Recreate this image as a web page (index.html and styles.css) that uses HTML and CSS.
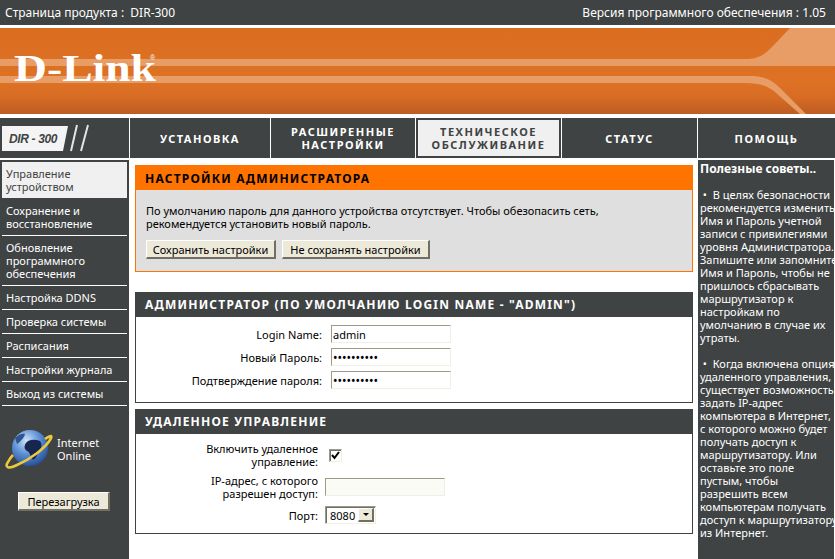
FILE: index.html
```html
<!DOCTYPE html>
<html lang="ru">
<head>
<meta charset="utf-8">
<title>D-Link DIR-300</title>
<link rel="stylesheet" href="styles.css">
</head>
<body>
<header class="topbar">
  <span>Страница продукта :&nbsp; DIR-300</span>
  <span>Версия программного обеспечения : 1.05</span>
</header>
<div class="banner">
  <svg class="banner-art" width="835" height="86" viewBox="0 0 835 86" aria-label="D-Link">
    <defs>
      <linearGradient id="bg" x1="0" y1="0" x2="0" y2="1">
        <stop offset="0" stop-color="#da6d20"/>
        <stop offset="0.6" stop-color="#de7224"/>
        <stop offset="0.8" stop-color="#d86c24"/>
        <stop offset="1" stop-color="#bd5c24"/>
      </linearGradient>
    </defs>
    <rect width="835" height="86" fill="url(#bg)"/>
    <path d="M0 31H745C758 31 764 27 772 19L790 0H835V38C800 38 780 38 760 38H0Z" fill="#e89d66"/>
    <path d="M0 48H750C765 48 772 52 780 60L806 86H835V86H800L775 64C768 58 760 55 745 55H0Z" fill="#e89d66"/>
    <text class="logo" x="14" y="53" textLength="142" lengthAdjust="spacingAndGlyphs">D-Link</text>
    <text class="logo-r" x="150" y="32">®</text>
  </svg>
</div>
<nav class="nav">
  <div class="nav-cell nav-model">
    <svg width="90" height="28" viewBox="0 0 90 28">
      <path d="M2 2H68L63 27H2Z" fill="#f4f4f4"/>
      <text class="model" x="9" y="19" textLength="50">DIR - 300</text>
      <path d="M77 1L71 27M88 1L81 27" stroke="#e4e4e4" stroke-width="2" fill="none"/>
    </svg>
  </div>
  <div class="nav-cell nav-a">УСТАНОВКА</div>
  <div class="nav-cell nav-b">РАСШИРЕННЫЕ<br>НАСТРОЙКИ</div>
  <div class="nav-cell nav-c active"><span>ТЕХНИЧЕСКОЕ<br>ОБСЛУЖИВАНИЕ</span></div>
  <div class="nav-cell nav-d">СТАТУС</div>
  <div class="nav-cell nav-e">ПОМОЩЬ</div>
</nav>
<div class="layout">
  <aside class="side">
    <ul class="menu">
      <li class="current">Управление<br>устройством</li>
      <li>Сохранение и<br>восстановление</li>
      <li>Обновление<br>программного<br>обеспечения</li>
      <li>Настройка DDNS</li>
      <li>Проверка системы</li>
      <li>Расписания</li>
      <li>Настройки журнала</li>
      <li>Выход из системы</li>
    </ul>
    <div class="online">
      <svg width="48" height="42" viewBox="0 0 48 42">
        <defs>
          <radialGradient id="globe" cx="0.4" cy="0.3" r="0.8">
            <stop offset="0" stop-color="#cfe2f8"/>
            <stop offset="0.45" stop-color="#5f92d8"/>
            <stop offset="1" stop-color="#1c3f8c"/>
          </radialGradient>
        </defs>
        <circle cx="25" cy="20" r="18" fill="url(#globe)"/>
        <path d="M21 15C24 11 30 11 35 13C38 17 36 21 33 24C32 29 29 33 27 31C25 27 25 24 22 23C19 21 19 18 21 15Z" fill="#16264f"/>
        <path d="M10 10C14 6 18 5 20 6C19 10 15 14 12 16Z" fill="#2d568f"/>
        <path d="M40 11C46 7 48 7 45 12C40 20 26 31 12 37C4 41 -1 40 3 34C4 32 6 29 8 27" fill="none" stroke="#e9c93d" stroke-width="2.6"/>
      </svg>
      <span>Internet<br>Online</span>
    </div>
    <button class="btn reboot" type="button">Перезагрузка</button>
  </aside>
  <main class="main">
    <section class="notice">
      <h2 class="notice-title">НАСТРОЙКИ АДМИНИСТРАТОРА</h2>
      <div class="notice-body">
        <p>По умолчанию пароль для данного устройства отсутствует. Чтобы обезопасить сеть,<br>рекомендуется установить новый пароль.</p>
        <div class="btn-row">
          <button class="btn save" type="button">Сохранить настройки</button>
          <button class="btn nosave" type="button">Не сохранять настройки</button>
        </div>
      </div>
    </section>
    <section class="panel panel-admin">
      <h2 class="panel-title">АДМИНИСТРАТОР (ПО УМОЛЧАНИЮ LOGIN NAME - "ADMIN")</h2>
      <div class="form form-admin">
        <label>Login Name:</label><input class="field" type="text" value="admin">
        <label>Новый Пароль:</label><input class="field pass" type="password" value="1234567890">
        <label>Подтверждение пароля:</label><input class="field pass" type="password" value="1234567890">
      </div>
    </section>
    <section class="panel panel-remote">
      <h2 class="panel-title">УДАЛЕННОЕ УПРАВЛЕНИЕ</h2>
      <div class="form form-remote">
        <label>Включить удаленное<br>управление:</label>
        <span class="check"><svg width="9" height="9" viewBox="0 0 9 9"><path d="M1 4L3.5 7L8 1" fill="none" stroke="#000" stroke-width="2"/></svg></span>
        <label>IP-адрес, с которого<br>разрешен доступ:</label>
        <input class="field field-dim" type="text">
        <label>Порт:</label>
        <span class="combo"><span class="combo-value">8080</span><span class="combo-arrow"></span></span>
      </div>
    </section>
  </main>
  <aside class="tips">
    <h3>Полезные советы..</h3>
    <p>&nbsp;• &nbsp;В целях безопасности<br>рекомендуется изменить<br>Имя и Пароль учетной<br>записи с привилегиями<br>уровня Администратора.<br>Запишите или запомните<br>Имя и Пароль, чтобы не<br>пришлось сбрасывать<br>маршрутизатор к<br>настройкам по<br>умолчанию в случае их<br>утраты.</p>
    <p>&nbsp;• &nbsp;Когда включена опция<br>удаленного управления,<br>существует возможность<br>задать IP-адрес<br>компьютера в Интернет,<br>с которого можно будет<br>получать доступ к<br>маршрутизатору. Или<br>оставьте это поле<br>пустым, чтобы<br>разрешить всем<br>компьютерам получать<br>доступ к маршрутизатору<br>из Интернет.</p>
  </aside>
</div>
</body>
</html>
```
FILE: styles.css
```css
* { box-sizing: border-box; }
html, body { margin: 0; padding: 0; height: 559px; overflow: hidden; background: #fff; }
body { font: 11px/13px "Noto Sans", Tahoma, sans-serif; color: #000; }
h2, h3, p, ul { margin: 0; padding: 0; }

.topbar {
  height: 25px; background: #404343; color: #fff;
  font-size: 12px; line-height: 25px;
  display: flex; justify-content: space-between; padding: 0 9px 0 5px;
}
.banner { height: 86px; margin: 3px 0 4px; }
.banner-art { display: block; }
.logo { font: bold 38px "Liberation Serif", serif; fill: #fff; }
.logo-r { font: 7px "Liberation Sans", sans-serif; fill: #fff; }

.nav { height: 40px; display: flex; background: #fff; }
.nav-cell {
  background: #404343; color: #fff; font-weight: bold; letter-spacing: 1.5px;
  display: flex; align-items: center; justify-content: center; text-align: center;
}
.nav-model { width: 129px; justify-content: flex-start; }
.model { font: italic bold 12px "Liberation Sans", sans-serif; fill: #404343; }
.nav-a { width: 140px; margin-left: 1px; }
.nav-b { width: 144px; margin-left: 1px; }
.nav-c { width: 145px; margin-left: 1px; padding: 2px; }
.nav-c span { display: block; flex: 1; align-self: stretch; background: #f0f0f0; color: #404343; padding-top: 5px; }
.nav-d { width: 135px; margin-left: 1px; }
.nav-e { width: 137px; margin-left: 1px; }

.layout { display: flex; height: 401px; margin-top: 2px; }
.side { width: 129px; background: #404343; padding: 2px 2px 0; color: #fff; }
.menu { list-style: none; }
.menu li { padding: 5px 4px 5px 4px; border-bottom: 1px solid #fff; white-space: nowrap; }
.menu li.current { background: #f0f0f0; color: #404343; border-bottom-color: #404343; }
.online { display: flex; align-items: center; gap: 4px; padding: 22px 0 0 3px; }
.online svg { display: block; flex: none; }
.btn {
  font: 11px/13px "Noto Sans", Tahoma, sans-serif; color: #000; height: 19px; padding: 0;
  background: #ece9d8; cursor: default;
  border-style: solid; border-width: 1px 2px 2px 1px;
  border-color: #fff #716f64 #716f64 #fff;
}
.reboot { display: block; width: 92px; margin: 22px 0 0 16px; }

.main { width: 569px; padding: 5px 0 0 6px; margin-left: 0; }
.notice { width: 558px; height: 107px; border: 1px solid #ff7300; background: #dfdfdf; }
.notice-title {
  height: 24px; margin: 0; background: #ff7300; color: #000;
  font-size: 12px; line-height: 25px; letter-spacing: 1.2px; padding-left: 9px;
}
.notice-body { padding: 14px 0 0 10px; }
.btn-row { display: flex; gap: 6px; margin-top: 10px; }
.save { width: 130px; }
.nosave { width: 148px; }

.panel { width: 558px; border: 1px solid #404343; border-top: 0; background: #fff; }
.panel-admin { height: 111px; margin-top: 20px; }
.panel-remote { height: 125px; margin-top: 6px; }
.panel-title {
  height: 25px; background: #404343; color: #fff;
  font-size: 12px; line-height: 25px; letter-spacing: 1.2px; padding-left: 10px; margin: 0 -1px;
}
.form { display: grid; align-items: center; }
.form label { text-align: right; }
.form-admin { grid-template-columns: 186px 120px; column-gap: 9px; row-gap: 5px; padding-top: 8px; }
.form-remote { grid-template-columns: 182px 120px; column-gap: 7px; row-gap: 6px; padding-top: 8px; }
.field {
  display: block; width: 120px; height: 18px; padding: 0 1px; margin: 0; outline: 0;
  font: 11px/13px "Noto Sans", Tahoma, sans-serif; color: #000; background: #fff;
  border-style: solid; border-width: 1px;
  border-color: #9d9a8a #f1efe2 #f1efe2 #9d9a8a;
}
.pass { letter-spacing: 0; font-size: 12px; }
.field-dim { background: #fbfbf6; }
.check {
  width: 13px; height: 13px; margin-left: 4px; display: flex; align-items: center; justify-content: center;
  background: #fff; border-style: solid; border-width: 1px;
  border-color: #9d9a8a #f1efe2 #f1efe2 #9d9a8a; box-shadow: inset 1px 1px 0 #716f64;
}
.combo {
  width: 51px; height: 18px; display: flex; align-items: center; background: #fff;
  border-style: solid; border-width: 1px;
  border-color: #9d9a8a #f1efe2 #f1efe2 #9d9a8a; box-shadow: inset 1px 1px 0 #716f64;
}
.combo-value { flex: 1; padding-left: 4px; }
.combo-arrow {
  width: 16px; height: 14px; margin-right: 1px; display: flex; align-items: center; justify-content: center;
  background: #ece9d8; border-style: solid; border-width: 1px 2px 2px 1px;
  border-color: #fff #716f64 #716f64 #fff;
}
.combo-arrow::after {
  content: ""; border-style: solid; border-width: 3px 3px 0; border-color: #000 transparent transparent;
}

.tips { width: 136px; margin-left: 0; background: #404343; color: #fff; padding: 2px 0 0 2px; white-space: nowrap; }
.tips h3 { font-size: 12px; line-height: 13px; margin-bottom: 13px; font-weight: bold; }
.tips p { margin-bottom: 13px; }
```
